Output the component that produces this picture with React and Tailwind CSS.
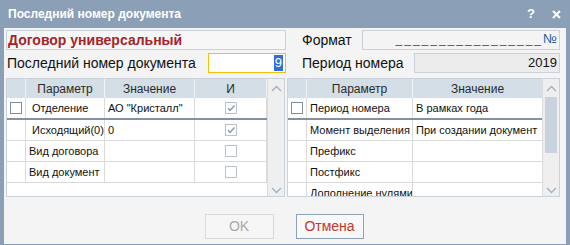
import React from "react";

const font = { fontFamily: '"Liberation Sans", Arial, sans-serif' };

const Check = ({ checked }) => (
  <div className="w-[12px] h-[12px] border border-[#b9c2cb] bg-white flex items-center justify-center">
    {checked && (
      <svg width="10" height="10" viewBox="0 0 10 10">
        <path d="M2 5 L4 7.5 L8.5 2.5" fill="none" stroke="#8b96a1" strokeWidth="1.4" />
      </svg>
    )}
  </div>
);

const Chevron = ({ up }) => (
  <svg width="11" height="7" viewBox="0 0 11 7">
    <path
      d={up ? "M1 6 L5.5 1.5 L10 6" : "M1 1 L5.5 5.5 L10 1"}
      fill="none"
      stroke="#9fb0c1"
      strokeWidth="1.3"
    />
  </svg>
);

const Scrollbar = ({ thumb }) => (
  <div className="w-[17px] shrink-0 bg-[#efefef] border-l border-[#dcdcdc] flex flex-col">
    <div className="h-[18px] flex items-center justify-center">
      <Chevron up />
    </div>
    <div className="flex-1 px-[2px]">
      {thumb && <div className="h-[56px] bg-[#c8d3de]" />}
    </div>
    <div className="h-[12px] flex items-center justify-center">
      <Chevron />
    </div>
  </div>
);

const HeaderCell = ({ w, children }) => (
  <div
    className={`${w} shrink-0 h-full flex items-center justify-center border-r border-[#eef2f5] text-[12px] text-[#2a2a2a]`}
  >
    {children}
  </div>
);

const Cell = ({ w, children, center }) => (
  <div
    className={`${w} shrink-0 h-full flex items-center ${center ? "justify-center" : "pl-[3px]"} border-r border-[#dadada] overflow-hidden whitespace-nowrap text-[11px] text-[#111]`}
  >
    {children}
  </div>
);

const Row = ({ first, children }) => (
  <div
    className={`flex shrink-0 ${first ? "border-b-2 border-[#8391a0] h-[22px]" : "border-b border-[#dadada] h-[21px]"}`}
  >
    {children}
  </div>
);

const leftRows = [
  { cb: true, p: "\u00a0Отделение", v: "АО \"Кристалл\"", i: true },
  { p: "\u00a0Исходящий(0)", v: "0", i: true },
  { p: "Вид договора", v: "", i: false },
  { p: "Вид документ", v: "", i: false },
];

const rightRows = [
  { cb: true, p: "Период номера", v: "В рамках года" },
  { p: "Момент выделения", v: "При создании документ" },
  { p: "Префикс", v: "" },
  { p: "Постфикс", v: "" },
  { p: "Дополнение нулями", v: "" },
];

export default function App() {
  return (
    <div style={font} className="w-[570px] h-[245px] bg-[#8ba0b6] flex flex-col overflow-hidden">
      {/* title bar */}
      <div className="h-[28px] shrink-0 flex items-center pl-[8px] pr-[9px] text-white font-bold text-[12px]">
        <span>Последний номер документа</span>
        <span className="ml-auto mr-[17px] text-[13px]">?</span>
        <svg width="9" height="9" viewBox="0 0 9 9">
          <path d="M1 1 L8 8 M8 1 L1 8" stroke="white" strokeWidth="2" />
        </svg>
      </div>

      {/* body */}
      <div className="flex-1 mx-[4px] mb-[1px] bg-[#f4f4f4] pl-[2px] pr-[6px] pt-[2px] flex flex-col">
        <div className="flex h-[20px]">
          <div className="w-[280px] h-full border border-[#c9d2db] bg-[#f7f7f7] flex items-center pl-[1px] text-[14px] font-bold text-[#a3252b]">
            Договор универсальный
          </div>
          <div className="flex-1 ml-[1px] flex items-center">
            <span className="w-[75px] pl-[15px] text-[14px] text-[#111]">Формат</span>
            <div className="flex-1 h-full border border-[#c9d2db] bg-[#f4f4f4] flex items-end justify-end pr-[2px] pb-[1px] text-[12px] text-[#1d5fa3]">
              <span className="tracking-[2px]">_________________</span>
              <span className="text-[13px]">№</span>
            </div>
          </div>
        </div>

        <div className="flex h-[20px] mt-[3px]">
          <div className="w-[280px] h-full flex items-center">
            <span className="pl-[1px] text-[14px] text-[#111]">Последний номер документа</span>
            <div className="ml-auto w-[78px] h-full border border-[#f4c20d] bg-white flex items-center justify-end pr-[2px]">
              <span className="bg-[#2f6fd6] text-white text-[13px] leading-[16px] px-[1px]">9</span>
            </div>
          </div>
          <div className="flex-1 ml-[1px] flex items-center">
            <span className="w-[127px] pl-[15px] text-[14px] text-[#111]">Период номера</span>
            <div className="flex-1 h-full border border-[#c9d2db] bg-[#ececec] flex items-center justify-end pr-[2px] text-[13px] text-[#111]">
              2019
            </div>
          </div>
        </div>

        {/* tables */}
        <div className="flex mt-[5px] h-[119px]">
          <div className="w-[279px] h-full border border-[#c9d2db] bg-white flex overflow-hidden">
            <div className="flex-1 flex flex-col">
              <div className="flex h-[19px] shrink-0 bg-[#d4dee6]">
                <HeaderCell w="w-[19px]" />
                <HeaderCell w="w-[79px]">Параметр</HeaderCell>
                <HeaderCell w="w-[90px]">Значение</HeaderCell>
                <HeaderCell w="w-[72px]">И</HeaderCell>
              </div>
              {leftRows.map((r, idx) => (
                <Row key={idx} first={idx === 0}>
                  <Cell w="w-[19px]" center>
                    {r.cb && <div className="w-[12px] h-[12px] border border-[#7f8d9b] bg-white" />}
                  </Cell>
                  <Cell w="w-[79px]">{r.p}</Cell>
                  <Cell w="w-[90px]">{r.v}</Cell>
                  <Cell w="w-[72px]" center>
                    <Check checked={r.i} />
                  </Cell>
                </Row>
              ))}
            </div>
            <Scrollbar />
          </div>

          <div className="w-[273px] ml-[2px] h-full border border-[#c9d2db] bg-white flex overflow-hidden">
            <div className="flex-1 flex flex-col overflow-hidden">
              <div className="flex h-[19px] shrink-0 bg-[#d4dee6]">
                <HeaderCell w="w-[19px]" />
                <HeaderCell w="w-[106px]">Параметр</HeaderCell>
                <HeaderCell w="w-[130px]">Значение</HeaderCell>
              </div>
              {rightRows.map((r, idx) => (
                <Row key={idx} first={idx === 0}>
                  <Cell w="w-[19px]" center>
                    {r.cb && <div className="w-[12px] h-[12px] border border-[#7f8d9b] bg-white" />}
                  </Cell>
                  <Cell w="w-[106px]">{r.p}</Cell>
                  <Cell w="w-[130px]">{r.v}</Cell>
                </Row>
              ))}
            </div>
            <Scrollbar thumb />
          </div>
        </div>

        {/* buttons */}
        <div className="flex justify-center gap-[22px] mt-[17px] pl-[2px]">
          <div className="w-[69px] h-[25px] border border-[#d9d9d9] bg-[#f6f6f6] flex items-center justify-center text-[14px] text-[#a9a9a9]">
            OK
          </div>
          <div className="w-[68px] h-[25px] border border-[#8fa3b8] bg-[#f8f8f8] flex items-center justify-center text-[14px] text-[#c0392b]">
            Отмена
          </div>
        </div>
      </div>
    </div>
  );
}
